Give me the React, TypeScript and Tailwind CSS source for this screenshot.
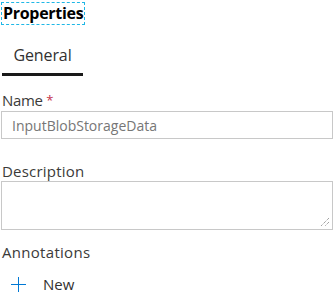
export default function App() {
  return (
    <div className="w-[333px] h-[293px] bg-white overflow-hidden font-['Open_Sans',sans-serif] text-[#323130]">
      {/* 标题 */}
      <div className="pl-[1px] pt-[1px]">
        <div className="inline-block border border-dashed border-[#1fb7e6] px-[1px] h-[23px] leading-[20px] text-[16px] font-bold text-black tracking-[-0.3px]">
          Properties
        </div>
      </div>

      {/* 탭 */}
      <div className="pl-[2px] mt-[20px]">
        <div className="w-[81px] flex flex-col items-center">
          <span className="text-[16px] leading-[20px] text-[#323130] tracking-[-0.1px]">General</span>
          <div className="mt-[8px] w-full h-[3px] bg-[#1a1a1a]" />
        </div>
      </div>

      {/* 이름 */}
      <div className="mt-[16px] pl-[1px]">
        <div className="pl-[1px] text-[15px] leading-[16px] text-[#3b3a39] tracking-[-0.3px]">
          Name <span className="text-[13px] text-[#c4314b] align-top">*</span>
        </div>
        <div className="mt-[3px] h-[28px] w-[332px] border border-[#c8c8c8] flex items-center px-[10px] text-[14px] text-[#767676]">
          InputBlobStorageData
        </div>
      </div>

      {/* 설명 */}
      <div className="mt-[24px] pl-[1px]">
        <div className="pl-[1px] text-[15px] leading-[16px] text-[#3b3a39] tracking-[0.2px]">Description</div>
        <div className="relative mt-[2px] h-[49px] w-[332px] border border-[#c8c8c8]">
          <svg className="absolute right-[2px] bottom-[2px]" width="10" height="10" viewBox="0 0 10 10">
            <path d="M9 1 L1 9 M9 5 L5 9" stroke="#7a7a7a" strokeWidth="1" strokeDasharray="1 1" />
          </svg>
        </div>
      </div>

      {/* 주석 */}
      <div className="mt-[14px] pl-[2px] text-[15px] leading-[16px] text-[#3b3a39] tracking-[0.3px]">Annotations</div>
      <div className="mt-[16px] pl-[11px] flex items-center gap-[17px]">
        <svg width="15" height="15" viewBox="0 0 15 15">
          <path d="M7.5 0 V15 M0 7.5 H15" stroke="#0078d4" strokeWidth="1" />
        </svg>
        <span className="text-[15px] leading-[16px] text-[#323130]">New</span>
      </div>
    </div>
  );
}
